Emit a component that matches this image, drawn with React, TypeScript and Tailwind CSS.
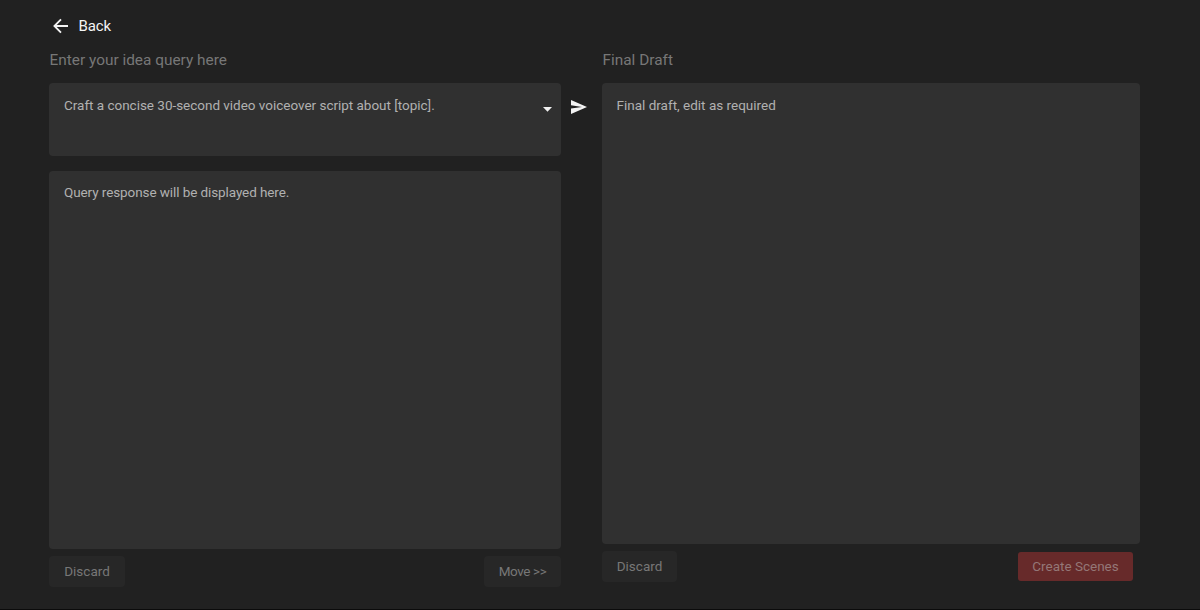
import React from "react";

const panel = "rounded-[4px] bg-[#303030] text-[13.5px] leading-5 text-[#b1b1b1]";
const mutedButton =
  "flex h-[31px] items-center justify-center rounded-[4px] bg-[#272727] text-[13.5px] text-[#777777]";

export default function App() {
  return (
    <main className="flex h-[610px] w-[1200px] flex-col overflow-hidden border-b border-[#0b0b0b] bg-[#212121] pl-[49px] font-['Roboto','Noto_Sans',sans-serif]">
      <button className="mt-4 ml-[4px] flex h-5 items-center self-start text-[15px] text-[#f4f4f4]">
        <svg width="16" height="16" viewBox="0 0 16 16" fill="none" stroke="currentColor" strokeWidth="1.8">
          <path d="M15 8H1.5M8 1.3L1.4 8L8 14.7" />
        </svg>
        <span className="ml-[9.5px] tracking-[-0.1px]">Back</span>
      </button>

      <div className="mt-[14px] flex items-start">
        <section className="w-[512px]">
          <h2 className="h-5 pl-[0.5px] text-[15.4px] leading-5 text-[#777777]">Enter your idea query here</h2>
          <div className={`${panel} mt-[13px] flex h-[73px] justify-between pt-[12px] pr-[9px] pl-[15px]`}>
            <span className="tracking-[-0.02px]">Craft a concise 30-second video voiceover script about [topic].</span>
            <svg width="9" height="5" viewBox="0 0 9 5" className="mt-[12px]" fill="#f2f2f2">
              <path d="M0 0H9L4.5 4.7Z" />
            </svg>
          </div>
          <div className={`${panel} mt-[15px] h-[378px] pt-[11px] pl-[15px] tracking-[-0.09px]`}>
            Query response will be displayed here.
          </div>
          <div className="mt-[7px] flex justify-between">
            <button className={`${mutedButton} w-[76px]`}>Discard</button>
            <button className={`${mutedButton} w-[77px] tracking-[-0.4px]`}>Move &gt;&gt;</button>
          </div>
        </section>

        <button aria-label="Send" className="mt-[50px] ml-[9.5px] w-[31.5px]">
          <svg width="16" height="14" viewBox="0 0 16 14" fill="#f4f4f4">
            <path d="M0 0L16 7L0 14V8.5L11 7L0 5.3Z" />
          </svg>
        </button>

        <section className="w-[538px]">
          <h2 className="h-5 pl-[0.5px] text-[15.4px] leading-5 text-[#777777]">Final Draft</h2>
          <div className={`${panel} mt-[13px] h-[461px] pt-[12px] pl-[14.5px]`}>Final draft, edit as required</div>
          <div className="mt-[7px] flex items-center justify-between pr-[7px]">
            <button className={`${mutedButton} w-[75px]`}>Discard</button>
            <button className="flex h-[29px] w-[115px] items-center justify-center rounded-[3px] bg-[#672a2a] text-[13.5px] text-[#947777]">
              Create Scenes
            </button>
          </div>
        </section>
      </div>
    </main>
  );
}
